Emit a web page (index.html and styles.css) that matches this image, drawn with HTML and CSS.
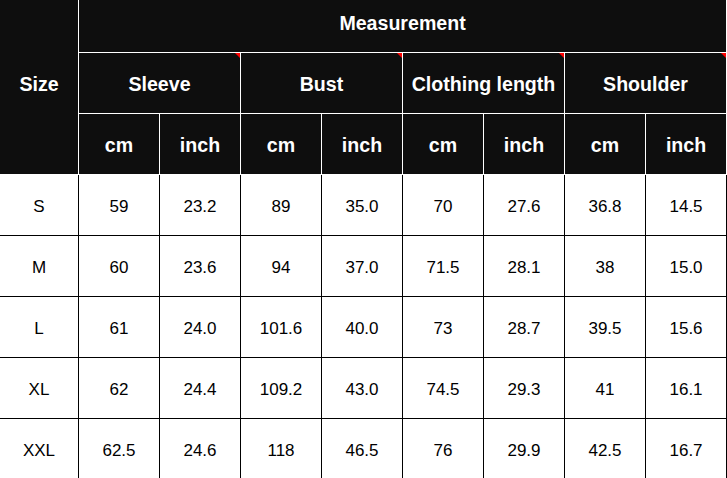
FILE: index.html
```html
<!DOCTYPE html>
<html>
<head>
<meta charset="utf-8">
<link rel="stylesheet" href="styles.css">
</head>
<body>
<table class="chart">
  <colgroup>
    <col class="c-size">
    <col class="c-val"><col class="c-val"><col class="c-val"><col class="c-val">
    <col class="c-val"><col class="c-val"><col class="c-val"><col class="c-val">
  </colgroup>
  <thead>
    <tr class="h1">
      <th rowspan="3" class="hd size">Size</th>
      <th colspan="8" class="hd">Measurement</th>
    </tr>
    <tr class="h2">
      <th colspan="2" class="hd grp">Sleeve<span class="flag"></span></th>
      <th colspan="2" class="hd grp">Bust<span class="flag"></span></th>
      <th colspan="2" class="hd grp">Clothing length<span class="flag"></span></th>
      <th colspan="2" class="hd grp">Shoulder<span class="flag"></span></th>
    </tr>
    <tr class="h3">
      <th class="hd">cm</th><th class="hd">inch</th>
      <th class="hd">cm</th><th class="hd">inch</th>
      <th class="hd">cm</th><th class="hd">inch</th>
      <th class="hd">cm</th><th class="hd">inch</th>
    </tr>
  </thead>
  <tbody>
    <tr><td>S</td><td>59</td><td>23.2</td><td>89</td><td>35.0</td><td>70</td><td>27.6</td><td>36.8</td><td>14.5</td></tr>
    <tr><td>M</td><td>60</td><td>23.6</td><td>94</td><td>37.0</td><td>71.5</td><td>28.1</td><td>38</td><td>15.0</td></tr>
    <tr><td>L</td><td>61</td><td>24.0</td><td>101.6</td><td>40.0</td><td>73</td><td>28.7</td><td>39.5</td><td>15.6</td></tr>
    <tr><td>XL</td><td>62</td><td>24.4</td><td>109.2</td><td>43.0</td><td>74.5</td><td>29.3</td><td>41</td><td>16.1</td></tr>
    <tr><td>XXL</td><td>62.5</td><td>24.6</td><td>118</td><td>46.5</td><td>76</td><td>29.9</td><td>42.5</td><td>16.7</td></tr>
  </tbody>
</table>
</body>
</html>
```
FILE: styles.css
```css
html, body {
  margin: 0;
  padding: 0;
  background: #ffffff;
}

.chart {
  border-collapse: separate;
  border-spacing: 0;
  table-layout: fixed;
  width: 727px;
  font-family: "Liberation Sans", Arial, sans-serif;
}

.c-size { width: 79px; }
.c-val { width: 81px; }

.chart th,
.chart td {
  box-sizing: border-box;
  padding: 0;
  text-align: center;
  vertical-align: middle;
  white-space: nowrap;
}

.hd {
  background: #0e0e0e;
  color: #ffffff;
  font-size: 19.6px;
  font-weight: bold;
  border-right: 1px solid #ffffff;
  border-bottom: 1px solid #ffffff;
}

.h1 th {
  height: 53px;
  padding-bottom: 6px;
}

.chart .size {
  padding-bottom: 6px;
}

.h2 th {
  height: 61px;
  padding-top: 2px;
}

.h3 th {
  height: 61px;
  padding-top: 2px;
}

.grp {
  position: relative;
}

.flag {
  position: absolute;
  top: 0;
  right: 0;
  width: 0;
  height: 0;
  border-top: 5px solid #ff0000;
  border-left: 5px solid transparent;
}

.chart td {
  height: 61px;
  padding-top: 3px;
  color: #000000;
  font-size: 17px;
  border-right: 1px solid #000000;
  border-bottom: 1px solid #000000;
}
```
